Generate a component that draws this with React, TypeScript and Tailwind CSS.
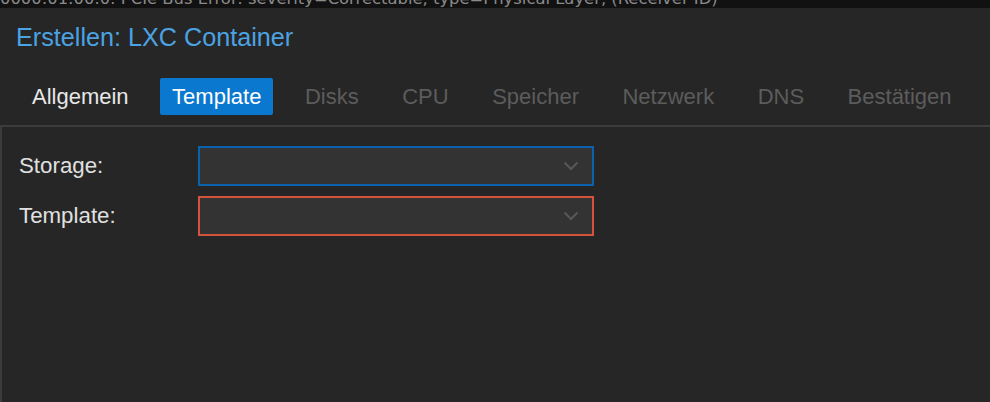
const tabs = [
  { label: 'Allgemein', state: 'done' },
  { label: 'Template', state: 'active' },
  { label: 'Disks', state: 'disabled' },
  { label: 'CPU', state: 'disabled' },
  { label: 'Speicher', state: 'disabled' },
  { label: 'Netzwerk', state: 'disabled' },
  { label: 'DNS', state: 'disabled' },
  { label: 'Bestätigen', state: 'disabled' },
];

function Combo({ invalid }: { invalid?: boolean }) {
  return (
    <div
      className={
        'w-[396px] h-[40px] bg-[#333333] border-2 flex items-center justify-end pr-[13px] ' +
        (invalid ? 'border-[#d4533a]' : 'border-[#0a62ad]')
      }
    >
      <svg width="16" height="10" viewBox="0 0 16 10" className="mt-[-1px]">
        <polyline points="1.5,1.5 8,8 14.5,1.5" fill="none" stroke="#585858" strokeWidth="2" />
      </svg>
    </div>
  );
}

export default function App() {
  return (
    <div
      className="w-[990px] h-[402px] bg-[#262626] overflow-hidden flex flex-col"
      style={{ fontFamily: '"Liberation Sans", Arial, sans-serif' }}
    >
      {/* log line of the console behind, mostly hidden */}
      <div className="h-[8px] bg-[#111111] overflow-hidden shrink-0">
        <div
          className="-mt-[11px] text-[16.4px] leading-[19px] text-[#8a8a8a] whitespace-nowrap"
          style={{ fontFamily: '"DejaVu Sans", sans-serif' }}
        >
          0000:01:00.0: PCIe Bus Error: severity=Correctable, type=Physical Layer, (Receiver ID)
        </div>
      </div>

      <div className="h-[60px] flex items-center pl-[16px] shrink-0">
        <span className="text-[25.2px] text-[#4ba3e3]">Erstellen: LXC Container</span>
      </div>

      <div className="mt-[10px] pb-[10px] pl-[20px] flex gap-[19.5px] border-b-2 border-[#3c3c3c] shrink-0">
        {tabs.map((t) => (
          <div
            key={t.label}
            className={
              'h-[37px] px-[12px] flex items-center text-[22px] rounded-[2px] ' +
              (t.state === 'active'
                ? 'bg-[#0b78d0] text-white'
                : t.state === 'done'
                ? 'text-[#e8e8e8]'
                : 'text-[#5c5c5c]')
            }
          >
            {t.label}
          </div>
        ))}
      </div>

      <div className="flex-1 border-l-2 border-[#3c3c3c] pt-[19px] pl-[17px] flex flex-col gap-[10px]">
        <div className="flex items-center">
          <div className="w-[179px] text-[22.3px] text-[#e0e0e0]">Storage:</div>
          <Combo />
        </div>
        <div className="flex items-center">
          <div className="w-[179px] text-[22.3px] text-[#e0e0e0]">Template:</div>
          <Combo invalid />
        </div>
      </div>
    </div>
  );
}
